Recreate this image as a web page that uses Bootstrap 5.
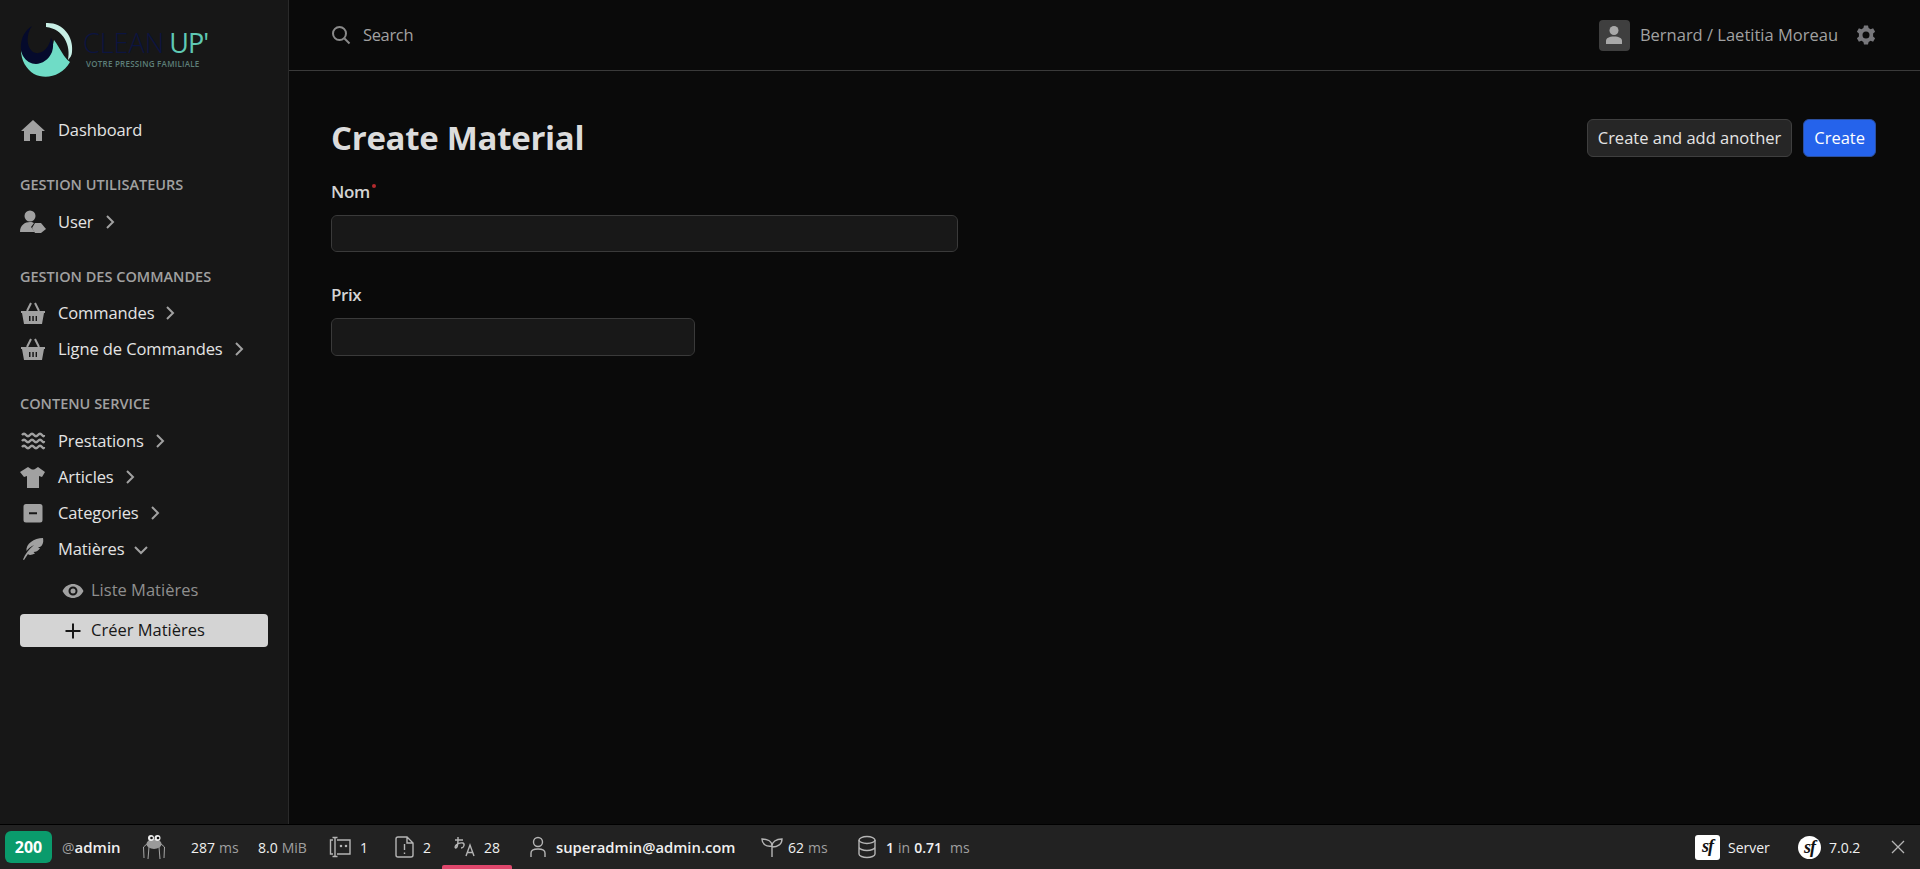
<!DOCTYPE html>
<html lang="en" data-bs-theme="dark">
<head>
    <meta charset="UTF-8">
    <meta name="viewport" content="width=device-width, initial-scale=1.0">
    <title>Create Material</title>
    <link href="https://cdn.jsdelivr.net/npm/bootstrap@5.3.0/dist/css/bootstrap.min.css" rel="stylesheet">
    <style>
        html, body { height: 100%; }
        body {
            background-color: #0a0a0a;
            font-family: "Open Sans", "Noto Sans", sans-serif;
            color: #d4d4d4;
            font-size: 16px;
            overflow: hidden;
        }
        .app-shell { height: 824px; }
        .side-col {
            width: 289px;
            flex: none;
            background-color: #171717;
            border-right: 1px solid #2a2a2a;
            padding: 0 20px;
        }
        .logo-box { height: 98px; padding-top: 22px; }
        .logo-text { margin-left: 9px; }
        .logo-name { font-size: 27px; line-height: 28px; color: #0c1440; font-weight: 300; margin-top: 7px; white-space: nowrap; }
        .logo-name span { color: #5fc9b4; font-weight: 400; margin-left: 5px; letter-spacing: -1px; }
        .logo-sub { font-size: 8px; line-height: 10px; color: #5d7f79; font-weight: 600; letter-spacing: .25px; margin: 2px 0 0 3px; white-space: nowrap; }
        .menu-head {
            font-size: 14.5px;
            font-weight: 600;
            color: #a1a1a1;
            height: 21px;
            line-height: 21px;
            white-space: nowrap;
        }
        .menu-row { height: 36px; font-size: 16.5px; letter-spacing: -.1px; color: #e4e4e4; white-space: nowrap; }
        .menu-ico { width: 26px; height: 26px; margin-right: 12px; flex: none; fill: #a1a1a1; }
        .chev { width: 12px; height: 14px; margin-left: 10px; fill: none; stroke: #a1a1a1; stroke-width: 2; }
        .chev-down { width: 16px; height: 12px; margin-left: 9px; margin-top: 3px; }
        .sub-row { height: 33px; padding-left: 42px; font-size: 16.5px; letter-spacing: 0; color: #8f8f8f; margin-top: 7px; white-space: nowrap; }
        .sub-ico { width: 22px; height: 22px; margin-right: 7px; fill: #a1a1a1; flex: none; }
        .sub-active { background-color: #d4d4d4; color: #171717; border-radius: 4px; }
        .sub-active .sub-ico { fill: #171717; }
        .top-strip { height: 71px; border-bottom: 1px solid #3a3a3a; padding: 0 44px 0 42px; }
        .strip-text { font-size: 16.5px; color: #a1a1a1; }
        .search-text { letter-spacing: -.35px; }
        .avatar-box { width: 31px; height: 31px; background-color: #3f3f3f; border-radius: 4px; margin-right: 10px; }
        .gear-ico { margin-left: 18px; }
        .form-area { padding: 47px 44px 0 42px; }
        .page-title { font-size: 33px; font-weight: 700; letter-spacing: -.3px; color: #dcdcdc; margin: 0; line-height: 40px; }
        .act-wrap { gap: 11px; }
        .act-btn {
            font-size: 16.5px;
            height: 38px;
            padding: 0 10px;
            border-radius: 6px;
            line-height: 36px;
            border: 1px solid #3f3f3f;
            background-color: #262626;
            color: #e4e4e4;
        }
        .act-blue { background-color: #2563eb; border-color: #2c4f9e; color: #fff; }
        .fld-label { font-size: 17px; font-weight: 600; letter-spacing: -.4px; color: #d4d4d4; line-height: 22px; display: block; margin-bottom: 12px; }
        .req-dot { display: inline-block; width: 4px; height: 4px; border-radius: 50%; background: #b32a2e; vertical-align: 10px; margin-left: 2px; }
        .fld-input {
            display: block;
            background-color: #181818;
            border: 1px solid #3a3a3a;
            border-radius: 6px;
            box-shadow: none;
        }
        .fld-input:focus { background-color: #181818; border-color: #3a3a3a; box-shadow: none; }
        .fld-wide { width: 627px; height: 37px; margin-bottom: 32px; }
        .fld-small { width: 364px; height: 38px; }
        .dbg-bar {
            height: 45px;
            background-color: #222222;
            border-top: 1px solid #000;
            font-size: 14px;
            color: #f0f0f0;
            padding-right: 15px;
            white-space: nowrap;
        }
        .dbg-status { background: #0a9b6c; color: #fff; font-weight: 700; width: 47px; height: 32px; border-radius: 6px; margin-left: 5px; font-size: 16px; }
        .dbg-item { height: 100%; display: flex; align-items: center; position: relative; }
        .dbg-mute { color: #a0a0a0; }
        .dbg-ico { fill: none; stroke: #b5b5b5; stroke-width: 1.4; flex: none; }
        .dbg-mark { position: absolute; left: 0; right: 0; bottom: 0; height: 4px; background: #e0476c; border-radius: 2px 2px 0 0; }
        .dbg-user { font-size: 14.8px; font-weight: 600; }
        .dbg-name { font-size: 15px; font-weight: 600; }
        .sf-mark { background: #fff; color: #111; font-family: "Liberation Serif", serif; font-style: italic; font-weight: 700; font-size: 18px; width: 25px; height: 25px; line-height: 23px; text-align: center; letter-spacing: -1px; }
        .sf-square { border-radius: 3px; }
        .sf-round { border-radius: 50%; width: 23px; height: 23px; line-height: 22px; }
    </style>
</head>
<body>
    <div class="app-shell d-flex">
        <!-- Sidebar -->
        <div class="side-col">
            <div class="logo-box d-flex">
                <svg width="54" height="56" viewBox="0 0 54 56">
                    <path d="M26 1 C42 0 54 14 52 30 C52 33 50 36 48 38 C51 24 44 7 26 5 Z" fill="#c8efe6"/>
                    <path d="M1 28 C5 44 30 46 34 18 C40 26 44 36 50 40 C42 54 26 58 14 52 C6 47 1 38 1 28 Z" fill="#6fdcc6"/>
                    <path d="M12 4 C2 10 -2 24 3 34 C10 46 26 44 32 30 C34 24 33 19 31 16 C29 27 20 34 13 30 C6 25 6 12 12 4 Z" fill="#050a2c"/>
                </svg>
                <div class="logo-text">
                    <div class="logo-name">CLEAN<span>UP'</span></div>
                    <div class="logo-sub">VOTRE PRESSING FAMILIALE</div>
                </div>
            </div>
            <div class="menu-row d-flex align-items-center" style="margin-top:14px">
                <svg class="menu-ico" viewBox="0 0 26 26"><path d="M13 3 L25 14 L22 14 L22 24 L16 24 L16 17 L10 17 L10 24 L4 24 L4 14 L1 14 Z"/></svg>Dashboard
            </div>
            <div class="menu-head" style="margin-top:26px">GESTION UTILISATEURS</div>
            <div class="menu-row d-flex align-items-center" style="margin-top:9px">
                <svg class="menu-ico" viewBox="0 0 26 26"><circle cx="10" cy="7" r="5.500"/><path d="M0 23 C0 16 5 13 10 13 C12 13 13 13.500 14 14 L11 18 L15 23 Z"/><path d="M15 14 L21 14 L26 20 L21 24 L15 24 L12 19 Z"/></svg>User
                <svg class="chev" viewBox="0 0 12 14"><path d="M3 1 L9 7 L3 13"/></svg>
            </div>
            <div class="menu-head" style="margin-top:26px">GESTION DES COMMANDES</div>
            <div class="menu-row d-flex align-items-center" style="margin-top:8px">
                <svg class="menu-ico" viewBox="0 0 26 26"><path d="M1 11 H25 V13 H24 L22 24 H4 L2 13 H1 Z M9 16 V21 H10.500 V16 Z M12.300 16 V21 H13.800 V16 Z M15.600 16 V21 H17 V16 Z" fill-rule="evenodd"/><path d="M7 11 L11 3 M19 11 L15 3" stroke="#a1a1a1" stroke-width="2" fill="none"/></svg>Commandes
                <svg class="chev" viewBox="0 0 12 14"><path d="M3 1 L9 7 L3 13"/></svg>
            </div>
            <div class="menu-row d-flex align-items-center">
                <svg class="menu-ico" viewBox="0 0 26 26"><path d="M1 11 H25 V13 H24 L22 24 H4 L2 13 H1 Z M9 16 V21 H10.500 V16 Z M12.300 16 V21 H13.800 V16 Z M15.600 16 V21 H17 V16 Z" fill-rule="evenodd"/><path d="M7 11 L11 3 M19 11 L15 3" stroke="#a1a1a1" stroke-width="2" fill="none"/></svg>Ligne de Commandes
                <svg class="chev" viewBox="0 0 12 14"><path d="M3 1 L9 7 L3 13"/></svg>
            </div>
            <div class="menu-head" style="margin-top:26px">CONTENU SERVICE</div>
            <div class="menu-row d-flex align-items-center" style="margin-top:9px">
                <svg class="menu-ico" viewBox="0 0 26 26"><path d="M2 7 q2 -2.500 4 0 t4 0 t4 0 t4 0 t4 0 t2 0 M2 13 q2 -2.500 4 0 t4 0 t4 0 t4 0 t4 0 t2 0 M2 19 q2 -2.500 4 0 t4 0 t4 0 t4 0 t4 0 t2 0" fill="none" stroke="#a1a1a1" stroke-width="2.400"/></svg>Prestations
                <svg class="chev" viewBox="0 0 12 14"><path d="M3 1 L9 7 L3 13"/></svg>
            </div>
            <div class="menu-row d-flex align-items-center">
                <svg class="menu-ico" viewBox="0 0 26 26"><path d="M8 3 L11 5 Q13 6 15 5 L18 3 L25 8 L22 13 L19 12 L19 24 L7 24 L7 12 L4 13 L0 8 Z"/></svg>Articles
                <svg class="chev" viewBox="0 0 12 14"><path d="M3 1 L9 7 L3 13"/></svg>
            </div>
            <div class="menu-row d-flex align-items-center">
                <svg class="menu-ico" viewBox="0 0 26 26"><path d="M6 4 H20 A2.500 2.500 0 0 1 22.500 6.500 V20 A2.500 2.500 0 0 1 20 22.500 H6 A2.500 2.500 0 0 1 3.500 20 V6.500 A2.500 2.500 0 0 1 6 4 Z M9 12.300 V14.300 H17 V12.300 Z" fill-rule="evenodd"/></svg>Categories
                <svg class="chev" viewBox="0 0 12 14"><path d="M3 1 L9 7 L3 13"/></svg>
            </div>
            <div class="menu-row d-flex align-items-center">
                <svg class="menu-ico" viewBox="0 0 26 26"><path d="M23 2 C24 7 22 10 20 11 L18 11 L20 12.500 C18 15 16 16 13.500 16 L15 17.500 C12 19 9 19.500 8 18 L4 24 L3 23.500 C5 18 9 13 14 9 C10 11 8 13 6.500 15 C5.500 8 14 2 23 2 Z"/></svg>Matières
                <svg class="chev chev-down" viewBox="0 0 16 12"><path d="M2 2 L8 8 L14 2"/></svg>
            </div>
            <div class="sub-row d-flex align-items-center">
                <svg class="sub-ico" viewBox="0 0 22 22"><path d="M0.500 11 C3 6 7 4 11 4 C15 4 19 6 21.500 11 C19 16 15 18 11 18 C7 18 3 16 0.500 11 Z M11 6.500 A4.500 4.500 0 1 0 11 15.500 A4.500 4.500 0 1 0 11 6.500 Z" fill-rule="evenodd"/><circle cx="11" cy="11" r="2.500"/></svg>Liste Matières
            </div>
            <div class="sub-row sub-active d-flex align-items-center">
                <svg class="sub-ico" viewBox="0 0 22 22"><path d="M10 3.500 H12 V10 H18.500 V12 H12 V18.500 H10 V12 H3.500 V10 H10 Z"/></svg>Créer Matières
            </div>
        </div>

        <!-- Main -->
        <div class="flex-grow-1">
            <div class="top-strip d-flex align-items-center justify-content-between">
                <div class="d-flex align-items-center strip-text">
                    <svg width="20" height="20" viewBox="0 0 20 20" class="me-2" fill="none" stroke="#8a8a8a" stroke-width="2"><circle cx="8.500" cy="8.500" r="6.500"/><path d="M13.500 13.500 L18.500 18.500"/></svg>
                    <span class="ms-1 search-text">Search</span>
                </div>
                <div class="d-flex align-items-center strip-text">
                    <div class="avatar-box d-flex align-items-center justify-content-center">
                        <svg width="20" height="20" viewBox="0 0 20 20" fill="#a8a8a8"><circle cx="10" cy="5.500" r="4.500"/><path d="M2 19 V16 C2 13 5 11.500 10 11.500 C15 11.500 18 13 18 16 V19 Z"/></svg>
                    </div>
                    Bernard / Laetitia Moreau
                    <svg width="20" height="20" viewBox="0 0 20 20" class="gear-ico" fill="#77777b"><path d="M8 0.500 H12 L12.600 3.100 L14.600 4.200 L17.100 3.300 L19.100 6.700 L17.100 8.500 V11.500 L19.100 13.300 L17.100 16.700 L14.600 15.800 L12.600 16.900 L12 19.500 H8 L7.400 16.900 L5.400 15.800 L2.900 16.700 L0.900 13.300 L2.900 11.500 V8.500 L0.900 6.700 L2.900 3.300 L5.400 4.200 L7.400 3.100 Z M10 6.500 A3.500 3.500 0 1 0 10 13.500 A3.500 3.500 0 1 0 10 6.500 Z" fill-rule="evenodd"/></svg>
                </div>
            </div>
            <div class="form-area">
                <div class="d-flex justify-content-between align-items-center" style="margin-bottom:23px">
                    <h1 class="page-title">Create Material</h1>
                    <div class="d-flex act-wrap">
                        <button class="btn act-btn" type="button">Create and add another</button>
                        <button class="btn act-btn act-blue" type="button">Create</button>
                    </div>
                </div>
                <label class="fld-label">Nom<span class="req-dot"></span></label>
                <input class="form-control fld-input fld-wide" type="text">
                <label class="fld-label">Prix</label>
                <input class="form-control fld-input fld-small" type="text">
            </div>
        </div>
    </div>

    <!-- Symfony debug toolbar -->
    <div class="dbg-bar d-flex align-items-center">
        <div class="dbg-status d-flex align-items-center justify-content-center">200</div>
        <div class="dbg-item" style="margin-left:10px;width:80px"><span class="dbg-mute">@</span><span class="dbg-name">admin</span></div>
        <div class="dbg-item" style="width:49px">
            <svg width="24" height="28" viewBox="0 0 24 28" fill="none" stroke="#c8c8c8" stroke-width=".8"><path d="M6 10 L1.500 14 L2 25 M18 10 L22.500 14 L22 25 M7 14 L6 26 M17 14 L18 26"/><ellipse cx="12" cy="11" rx="7.500" ry="5" fill="#9a9a9a" stroke="none"/><circle cx="9" cy="5" r="3" fill="#eee" stroke="none"/><circle cx="15.500" cy="5" r="3" fill="#eee" stroke="none"/><circle cx="9.500" cy="5" r="1.300" fill="#111" stroke="none"/><circle cx="16" cy="5" r="1.300" fill="#111" stroke="none"/></svg>
        </div>
        <div class="dbg-item" style="width:67px">287<span class="dbg-mute ms-1">ms</span></div>
        <div class="dbg-item" style="width:70px">8.0<span class="dbg-mute ms-1">MiB</span></div>
        <div class="dbg-item" style="width:65px">
            <svg class="dbg-ico me-2" width="24" height="24" viewBox="0 0 24 24"><path d="M5 5 H2.500 V19 H5 M7 3 V21 M4.500 2.500 H9.500 M4.500 21.500 H9.500 M9 5 H22 V19 H9"/><circle cx="13" cy="11" r=".6"/><circle cx="18" cy="11" r=".6"/></svg>1
        </div>
        <div class="dbg-item" style="width:49px">
            <svg class="dbg-ico me-2" width="22" height="24" viewBox="0 0 22 24"><path d="M3 4 A2 2 0 0 1 5 2 H14 L20 8 V20 A2 2 0 0 1 18 22 H5 A2 2 0 0 1 3 20 Z M14 2 V8 H20 M11.500 9 V15 M11.500 17.500 V19"/></svg>2
        </div>
        <div class="dbg-item justify-content-center" style="width:70px">
            <svg class="dbg-ico me-2" width="22" height="22" viewBox="0 0 22 22"><path d="M1 4 H9 M4 1 V4 C4 8 3 12 1.500 12 C0 11 3 6 9 7 C11 8 10 12 7 12 M12 20 L16 9 L20 20 M13.500 16.500 H18.500"/></svg>28
            <span class="dbg-mark"></span>
        </div>
        <div class="dbg-item" style="margin-left:16px;width:232px">
            <svg class="dbg-ico me-2" width="20" height="24" viewBox="0 0 20 24"><circle cx="10" cy="7" r="4.500"/><path d="M3 22 V18 C3 15 6 14 10 14 C14 14 17 15 17 18 V22"/></svg><span class="dbg-user">superadmin@admin.com</span>
        </div>
        <div class="dbg-item" style="width:96px">
            <svg class="dbg-ico me-1" width="24" height="24" viewBox="0 0 24 24"><path d="M12 22 V11 C12 6 7 4 2 4 C2 9 6 12 12 11 C12 7 16 4 22 4 C22 9 18 12 12 12"/></svg>62<span class="dbg-mute ms-1">ms</span>
        </div>
        <div class="dbg-item">
            <svg class="dbg-ico me-2" width="22" height="24" viewBox="0 0 22 24"><ellipse cx="11" cy="5" rx="8" ry="3.500"/><path d="M3 5 V19 C3 21 7 22.500 11 22.500 C15 22.500 19 21 19 19 V5 M3 12 C3 14 7 15.500 11 15.500 C15 15.500 19 14 19 12"/></svg>
            <span class="fw-semibold">1</span><span class="dbg-mute mx-1">in</span><span class="fw-semibold">0.71</span><span class="dbg-mute ms-2">ms</span>
        </div>
        <div class="ms-auto d-flex align-items-center">
            <div class="sf-mark sf-square me-2">sf</div>
            <span style="width:70px">Server</span>
            <div class="sf-mark sf-round me-2">sf</div>
            <span style="width:62px">7.0.2</span>
            <svg width="14" height="14" viewBox="0 0 14 14" stroke="#b5b5b5" stroke-width="1.300"><path d="M1 1 L13 13 M13 1 L1 13"/></svg>
        </div>
    </div>

    <script src="https://cdn.jsdelivr.net/npm/bootstrap@5.3.0/dist/js/bootstrap.bundle.min.js"></script>
</body>
</html>
